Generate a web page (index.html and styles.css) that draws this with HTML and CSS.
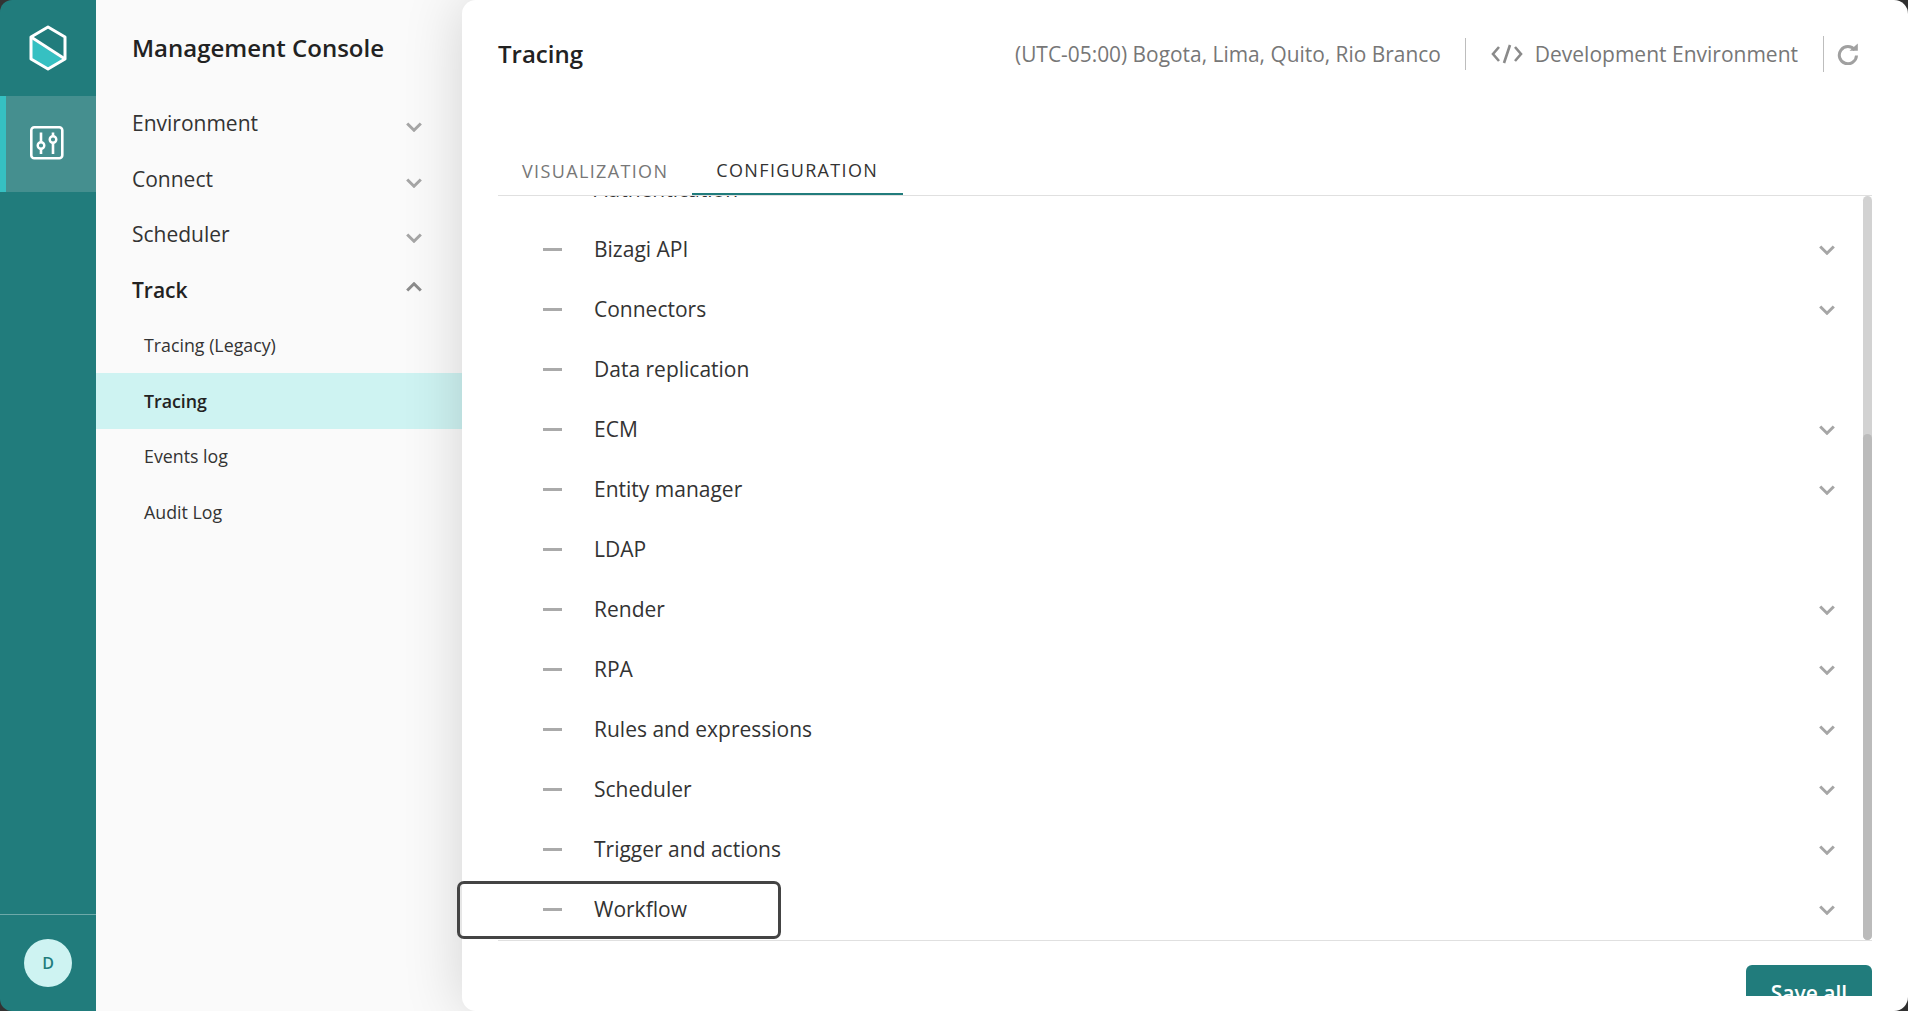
FILE: index.html
```html
<!DOCTYPE html>
<html lang="en">
<head>
<meta charset="utf-8">
<title>Management Console</title>
<link rel="stylesheet" href="styles.css">
</head>
<body>
<svg class="defs" width="0" height="0" aria-hidden="true">
  <symbol id="chev" viewBox="0 0 16 10"><path d="M1.200 1.500 8 8.200l6.800-6.700" fill="none" stroke="currentColor" stroke-width="3"/></symbol>
  <symbol id="chev-up" viewBox="0 0 16 10"><path d="M1.200 8.500 8 1.800l6.800 6.700" fill="none" stroke="currentColor" stroke-width="3"/></symbol>
</svg>
<div class="app">
  <aside class="rail">
    <div class="rail-logo">
      <svg width="40" height="46" viewBox="0 0 40 46">
        <path d="M3.500 14 36 35 20 44 3.500 34.500Z" fill="#36c0c2"/>
        <path d="M20 2 37 12V34L20 44 3 34V12Z" fill="none" stroke="#fff" stroke-width="3" stroke-linejoin="round"/>
        <path d="M3 12 37 34" fill="none" stroke="#fff" stroke-width="3"/>
      </svg>
    </div>
    <div class="rail-item">
      <svg width="36" height="36" viewBox="0 0 36 36">
        <rect x="2.300" y="2.300" width="31" height="31" rx="3" fill="none" stroke="#fff" stroke-width="2.600"/>
        <path d="M12 7.500V29M24 7.500V29" stroke="#fff" stroke-width="2.600"/>
        <circle cx="12" cy="20.500" r="3.300" fill="#458f8f" stroke="#fff" stroke-width="2.400"/>
        <circle cx="24" cy="14.500" r="3.300" fill="#458f8f" stroke="#fff" stroke-width="2.400"/>
      </svg>
    </div>
    <div class="rail-foot"><div class="avatar">D</div></div>
  </aside>
  <nav class="menu">
    <h1 class="menu-title">Management Console</h1>
    <div class="nav-row"><span>Environment</span><svg class="nav-chev"><use href="#chev"/></svg></div>
    <div class="nav-row"><span>Connect</span><svg class="nav-chev"><use href="#chev"/></svg></div>
    <div class="nav-row"><span>Scheduler</span><svg class="nav-chev"><use href="#chev"/></svg></div>
    <div class="nav-row nav-open"><span>Track</span><svg class="nav-chev nav-chev-up"><use href="#chev-up"/></svg></div>
    <div class="sub-row">Tracing (Legacy)</div>
    <div class="sub-row sub-active">Tracing</div>
    <div class="sub-row">Events log</div>
    <div class="sub-row">Audit Log</div>
  </nav>
  <main class="panel">
    <header class="head">
      <h2 class="head-title">Tracing</h2>
      <div class="head-info">
        <span class="zone">(UTC-05:00) Bogota, Lima, Quito, Rio Branco</span>
        <span class="sep"></span>
        <svg class="code-icon" width="32" height="22" viewBox="0 0 32 22"><path d="M8 4 2 11l6 7M24 4l6 7-6 7M19 2 13 20" fill="none" stroke="#8a8a8a" stroke-width="2.600"/></svg>
        <span class="env">Development Environment</span>
        <span class="sep sep-tall"></span>
        <svg class="reload" width="22" height="22" viewBox="0 0 22 22"><path d="M17.800 7A8.600 8.600 0 1 0 19.500 12.500" fill="none" stroke="#a0a0a0" stroke-width="3"/><path d="M12.500 7.800H20.800V0.500Z" fill="#a0a0a0"/></svg>
      </div>
    </header>
    <div class="tabs">
      <div class="tab">VISUALIZATION</div>
      <div class="tab tab-active">CONFIGURATION</div>
    </div>
    <div class="list-wrap">
      <div class="list-clip">
        <ul class="list">
          <li class="row"><span class="dash"></span><span class="label">Authentication</span></li>
          <li class="row"><span class="dash"></span><span class="label">Bizagi API</span><svg class="row-chev"><use href="#chev"/></svg></li>
          <li class="row"><span class="dash"></span><span class="label">Connectors</span><svg class="row-chev"><use href="#chev"/></svg></li>
          <li class="row"><span class="dash"></span><span class="label">Data replication</span></li>
          <li class="row"><span class="dash"></span><span class="label">ECM</span><svg class="row-chev"><use href="#chev"/></svg></li>
          <li class="row"><span class="dash"></span><span class="label">Entity manager</span><svg class="row-chev"><use href="#chev"/></svg></li>
          <li class="row"><span class="dash"></span><span class="label">LDAP</span></li>
          <li class="row"><span class="dash"></span><span class="label">Render</span><svg class="row-chev"><use href="#chev"/></svg></li>
          <li class="row"><span class="dash"></span><span class="label">RPA</span><svg class="row-chev"><use href="#chev"/></svg></li>
          <li class="row"><span class="dash"></span><span class="label">Rules and expressions</span><svg class="row-chev"><use href="#chev"/></svg></li>
          <li class="row"><span class="dash"></span><span class="label">Scheduler</span><svg class="row-chev"><use href="#chev"/></svg></li>
          <li class="row"><span class="dash"></span><span class="label">Trigger and actions</span><svg class="row-chev"><use href="#chev"/></svg></li>
          <li class="row"><span class="dash"></span><span class="label">Workflow</span><svg class="row-chev"><use href="#chev"/></svg></li>
        </ul>
        <div class="scrollbar"><div class="thumb"></div></div>
      </div>
      <div class="focus-ring"></div>
    </div>
    <footer class="foot"><button class="save">Save all</button></footer>
  </main>
</div>
</body>
</html>
```
FILE: styles.css
```css
* { box-sizing: border-box; }
html, body { margin: 0; height: 100%; overflow: hidden; background: #333; }
body { font-family: "Open Sans", "Liberation Sans", sans-serif; color: #333; }
.defs { position: absolute; }
.app { display: flex; height: 1011px; background: #333; }

.rail { width: 96px; flex: none; background: #217c7c; display: flex; flex-direction: column; border-radius: 12px 0 0 12px; }
.rail-logo { height: 96px; display: flex; align-items: center; justify-content: center; }
.rail-item { height: 96px; background: #458f8f; border-left: 6px solid #36c0c2; display: flex; align-items: center; justify-content: center; padding-right: 9px; padding-bottom: 3px; }
.rail-foot { margin-top: auto; height: 97px; border-top: 1px solid rgba(255,255,255,.35); display: flex; justify-content: center; padding-top: 24px; }
.avatar { width: 48px; height: 48px; border-radius: 50%; background: #cef3f2; color: #217c7c; font-size: 16px; font-weight: 600; display: flex; align-items: center; justify-content: center; }

.menu { width: 380px; flex: none; margin-right: -14px; background: #fafafa; display: flex; flex-direction: column; }
.menu-title { margin: 0; height: 95.500px; padding: 0 0 0 36px; font-size: 24px; font-weight: 600; line-height: 96px; color: #222; }
.nav-row { height: 55.500px; padding: 0 54px 0 36px; display: flex; align-items: center; justify-content: space-between; font-size: 21px; color: #333; }
.nav-open { font-weight: 600; color: #222; }
.nav-chev { width: 16px; height: 10px; margin-top: 8px; color: #a6a6a6; }
.nav-chev-up { margin-top: -6px; color: #8c8c8c; }
.sub-row { height: 55.500px; padding-left: 48px; display: flex; align-items: center; font-size: 17.800px; color: #333; }
.sub-active { background: #cef3f2; font-weight: 600; margin-right: 14px; color: #222; }

.panel { flex: 1; min-width: 0; position: relative; background: #fff; border-radius: 14px; padding: 0 36px; display: flex; flex-direction: column; box-shadow: 0 0 60px rgba(0,0,0,.16); }
.head { height: 108px; flex: none; display: flex; align-items: center; justify-content: space-between; }
.head-title { margin: 0 0 2px; font-size: 24px; font-weight: 600; color: #222; }
.head-info { display: flex; align-items: center; font-size: 21px; color: #777; margin-right: 13px; }
.zone { font-size: 20.900px; }
.sep { width: 1px; height: 32px; background: #bdbdbd; margin: 0 25px 0 24px; }
.sep-tall { height: 36px; margin: 0 13px 0 25px; }
.code-icon { margin-right: 12px; }
.reload { display: block; }

.tabs { height: 88px; flex: none; display: flex; align-items: flex-end; border-bottom: 1px solid #e0e0e0; }
.tab { height: 47px; padding: 0 24px 2px; display: flex; align-items: center; font-size: 18px; letter-spacing: 1.350px; color: #777; }
.tab-active { color: #333; border-bottom: 2px solid #217c7c; padding: 0 25px 2px 24px; }

.list-wrap { position: relative; height: 745px; flex: none; }
.list-clip { height: 100%; overflow: hidden; position: relative; border-bottom: 1px solid #e0e0e0; }
.list { list-style: none; margin: -37px 0 0; padding: 0; }
.row { height: 60px; display: flex; align-items: center; padding-left: 45px; padding-right: 37px; font-size: 21px; color: #333; }
.dash { width: 19px; height: 3px; background: #aaa; flex: none; margin: 1px 32px 0 0; }
.label { flex: 1; }
.row-chev { width: 16px; height: 10px; margin-top: 1px; color: #a6a6a6; }
.scrollbar { position: absolute; top: 0; right: 0; bottom: 0; width: 9px; background: #d2d2d2; border-radius: 5px; }
.thumb { position: absolute; left: 0; right: 0; bottom: 0; height: 506px; background: #bbb; border-radius: 5px; }
.focus-ring { position: absolute; left: -41px; top: 685px; width: 324px; height: 58px; border: 3px solid #444; border-radius: 7px; pointer-events: none; }

.foot { height: 55px; flex: none; overflow: hidden; display: flex; justify-content: flex-end; padding-top: 24px; }
.save { width: 126px; height: 56px; flex: none; border: 0; border-radius: 6px; background: #217c7c; color: #fff; font: 600 21px "Open Sans", "Liberation Sans", sans-serif; }
```
